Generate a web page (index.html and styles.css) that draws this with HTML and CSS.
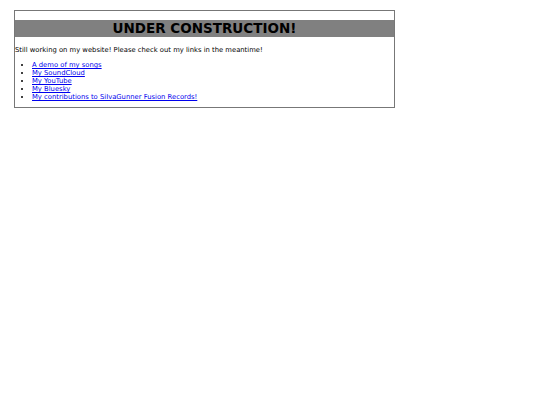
FILE: index.html
```html
<!DOCTYPE html>
<html>
<head>
<meta charset="utf-8">
<link rel="stylesheet" href="styles.css">
</head>
<body>
<div class="box">
  <h1 class="title">UNDER CONSTRUCTION!</h1>
  <p class="intro">Still working on my website! Please check out my links in the meantime!</p>
  <ul class="links">
    <li><a href="#">A demo of my songs</a></li>
    <li><a href="#">My SoundCloud</a></li>
    <li><a href="#">My YouTube</a></li>
    <li><a href="#">My Bluesky</a></li>
    <li><a href="#">My contributions to SiIvaGunner Fusion Records!</a></li>
  </ul>
</div>
</body>
</html>
```
FILE: styles.css
```css
html, body { margin: 0; padding: 0; background: #fff; }
body {
  font-family: "DejaVu Sans", Verdana, sans-serif;
  font-size: 6.8px;
  line-height: 8px;
  color: #000;
  padding: 10px 0 0 14px;
}
.box {
  width: 379px;
  border: 1px solid #777;
  padding: 9px 0 6px 0;
}
.title {
  margin: 0;
  background: #808080;
  text-align: center;
  font-size: 13.5px;
  line-height: 17px;
  font-weight: bold;
}
.intro { margin: 9px 0 7px 0; }
.links { margin: 0; padding-left: 17px; }
.links a { color: #0000ee; }
```
